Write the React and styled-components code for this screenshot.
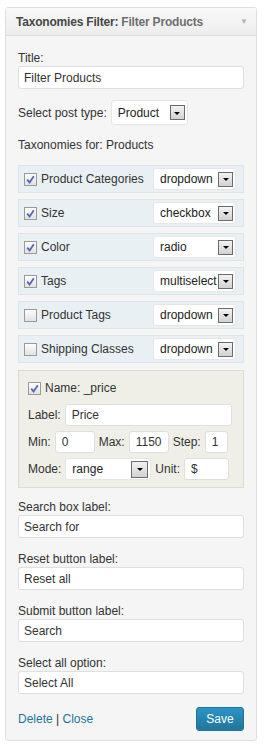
import React from 'react';
import styled, { createGlobalStyle } from 'styled-components';

const Global = createGlobalStyle`
  body {
    margin: 0;
    background: #fff;
    font-family: "Liberation Sans", Arial, sans-serif;
    font-size: 12px;
    color: #333;
  }
`;

const taxonomies = [
  { name: 'Product Categories', mode: 'dropdown', checked: true },
  { name: 'Size', mode: 'checkbox', checked: true },
  { name: 'Color', mode: 'radio', checked: true },
  { name: 'Tags', mode: 'multiselect', checked: true },
  { name: 'Product Tags', mode: 'dropdown', checked: false },
  { name: 'Shipping Classes', mode: 'dropdown', checked: false },
];

const fields = [
  { label: 'Search box label:', value: 'Search for' },
  { label: 'Reset button label:', value: 'Reset all' },
  { label: 'Submit button label:', value: 'Search' },
  { label: 'Select all option:', value: 'Select All' },
];

export default function App() {
  return (
    <>
      <Global />
      <Widget>
        <Header>
          <HeaderTitle>
            <b>Taxonomies Filter:</b> <span>Filter Products</span>
          </HeaderTitle>
          <Toggle>▼</Toggle>
        </Header>
        <Body>
          <Label>Title:</Label>
          <Input defaultValue="Filter Products" readOnly />

          <PostType>
            Select post type:
            <Select width={77} height={25}>
              <SelectText>Product</SelectText>
              <Arrow />
            </Select>
          </PostType>

          <SectionTitle>Taxonomies for: Products</SectionTitle>

          <TaxList>
            {taxonomies.map((t) => (
              <TaxRow key={t.name}>
                <Check checked={t.checked} />
                <TaxName>{t.name}</TaxName>
                <Select width={83} height={22}>
                  <SelectText>{t.mode}</SelectText>
                  <Arrow />
                </Select>
              </TaxRow>
            ))}
          </TaxList>

          <PriceBox>
            <NameRow>
              <Check checked />
              <span>Name: _price</span>
            </NameRow>
            <PriceRow>
              Label:
              <SmallInput defaultValue="Price" readOnly grow />
            </PriceRow>
            <PriceRow>
              Min:
              <SmallInput defaultValue="0" readOnly w={40} />
              Max:
              <SmallInput defaultValue="1150" readOnly w={40} />
              Step:
              <SmallInput defaultValue="1" readOnly w={23} />
            </PriceRow>
            <PriceRow>
              Mode:
              <Select width={86} height={22}>
                <SelectText>range</SelectText>
                <Arrow big />
              </Select>
              Unit:
              <SmallInput defaultValue="$" readOnly w={45} />
            </PriceRow>
          </PriceBox>

          <Fields>
            {fields.map((f) => (
              <div key={f.label}>
                <Label>{f.label}</Label>
                <Input defaultValue={f.value} readOnly />
              </div>
            ))}
          </Fields>

          <Footer>
            <Links>
              <a href="#">Delete</a> | <a href="#">Close</a>
            </Links>
            <SaveButton>Save</SaveButton>
          </Footer>
        </Body>
      </Widget>
    </>
  );
}

const Check = ({ checked }) => (
  <CheckBox>
    {checked && (
      <svg width="9" height="9" viewBox="0 0 9 9">
        <path d="M1.2 4.6 L3.6 7.4 L7.8 1.2" fill="none" stroke="#5468b0" strokeWidth="1.8" />
      </svg>
    )}
  </CheckBox>
);

const Widget = styled.div`
  box-sizing: border-box;
  width: 252px;
  height: 734px;
  margin: 7px 0 0 5px;
  border: 1px solid #dfdfdf;
  border-radius: 3px;
  background: #f5f5f5;
`;

const Header = styled.div`
  display: flex;
  align-items: center;
  justify-content: space-between;
  height: 27px;
  padding: 0 8px 0 10px;
  border-bottom: 1px solid #dfdfdf;
  background: linear-gradient(#f9f9f9, #ececec);
`;

const HeaderTitle = styled.div`
  font-size: 12px;
  color: #464646;
  letter-spacing: -0.2px;
  b { font-weight: bold; }
  span { color: #6f6f6f; font-weight: bold; }
`;

const Toggle = styled.span`
  color: #b4b4b4;
  font-size: 8px;
`;

const Body = styled.div`
  padding: 15px 12px 0 12px;
`;

const Label = styled.div`
  line-height: 15px;
  color: #333;
`;

const Input = styled.input`
  box-sizing: border-box;
  display: block;
  width: 100%;
  height: 23px;
  margin: 0;
  padding: 0 5px;
  border: 1px solid #dfdfdf;
  border-radius: 3px;
  background: #fff;
  font-family: inherit;
  font-size: 12px;
  color: #333;
  outline: none;
`;

const PostType = styled.div`
  display: flex;
  align-items: center;
  gap: 4px;
  margin-top: 11px;
`;

const Select = styled.div`
  box-sizing: border-box;
  display: flex;
  align-items: center;
  flex: none;
  width: ${(p) => p.width}px;
  height: ${(p) => p.height}px;
  padding: 0 2px 0 6px;
  background: #fff;
  border: 1px solid #e6e6e6;
  border-radius: 3px;
`;

const SelectText = styled.span`
  flex: 1;
  overflow: hidden;
  white-space: nowrap;
  color: #222;
  font-size: 12px;
`;

const Arrow = styled.span`
  box-sizing: border-box;
  position: relative;
  flex: none;
  width: ${(p) => (p.big ? 17 : 15)}px;
  height: ${(p) => (p.big ? 17 : 15)}px;
  border: 1px solid #6b6b6b;
  background: linear-gradient(#f2f2f2, #d2d2d2);
  &::after {
    content: '';
    position: absolute;
    left: 50%;
    top: 50%;
    margin: -1px 0 0 -3px;
    border-left: 3px solid transparent;
    border-right: 3px solid transparent;
    border-top: 3px solid #000;
  }
`;

const SectionTitle = styled.div`
  margin-top: 13px;
  line-height: 15px;
`;

const TaxList = styled.div`
  display: flex;
  flex-direction: column;
  gap: 6px;
  margin-top: 12px;
`;

const TaxRow = styled.div`
  box-sizing: border-box;
  display: flex;
  align-items: center;
  height: 28px;
  padding: 0 7px 0 5px;
  background: #e8f0f3;
  border: 1px solid #dce6ea;
`;

const CheckBox = styled.span`
  box-sizing: border-box;
  display: inline-flex;
  align-items: center;
  justify-content: center;
  flex: none;
  width: 13px;
  height: 13px;
  margin-right: 4px;
  border: 1px solid #9a9a9a;
  background: linear-gradient(#fdfdfd, #e2e2e2);
`;

const TaxName = styled.span`
  flex: 1;
  white-space: nowrap;
`;

const PriceBox = styled.div`
  box-sizing: border-box;
  margin-top: 7px;
  padding: 9px 11px 7px 9px;
  background: #efefe7;
  border: 1px solid #dcdcd2;
`;

const NameRow = styled.div`
  display: flex;
  align-items: center;
  height: 16px;
  margin-bottom: 8px;
`;

const PriceRow = styled.div`
  display: flex;
  align-items: center;
  gap: 4px;
  margin-top: 5px;
  &:nth-child(2) { margin-top: 0; }
`;

const SmallInput = styled(Input).withConfig({
  shouldForwardProp: (prop) => prop !== 'grow' && prop !== 'w',
})`
  flex: ${(p) => (p.grow ? 1 : 'none')};
  width: ${(p) => (p.w ? `${p.w}px` : 'auto')};
  height: 22px;
  padding: 0 6px;
  min-width: 0;
`;

const Fields = styled.div`
  display: flex;
  flex-direction: column;
  gap: 14px;
  margin-top: 12px;
`;

const Footer = styled.div`
  display: flex;
  align-items: center;
  justify-content: space-between;
  margin-top: 13px;
`;

const Links = styled.div`
  color: #333;
  a {
    color: #21759b;
    text-decoration: none;
  }
`;

const SaveButton = styled.button`
  box-sizing: border-box;
  width: 48px;
  height: 24px;
  padding: 0;
  border: 1px solid #21759b;
  border-radius: 3px;
  background: linear-gradient(#2a95c5, #21759b);
  color: #fff;
  font-family: inherit;
  font-size: 12px;
`;
